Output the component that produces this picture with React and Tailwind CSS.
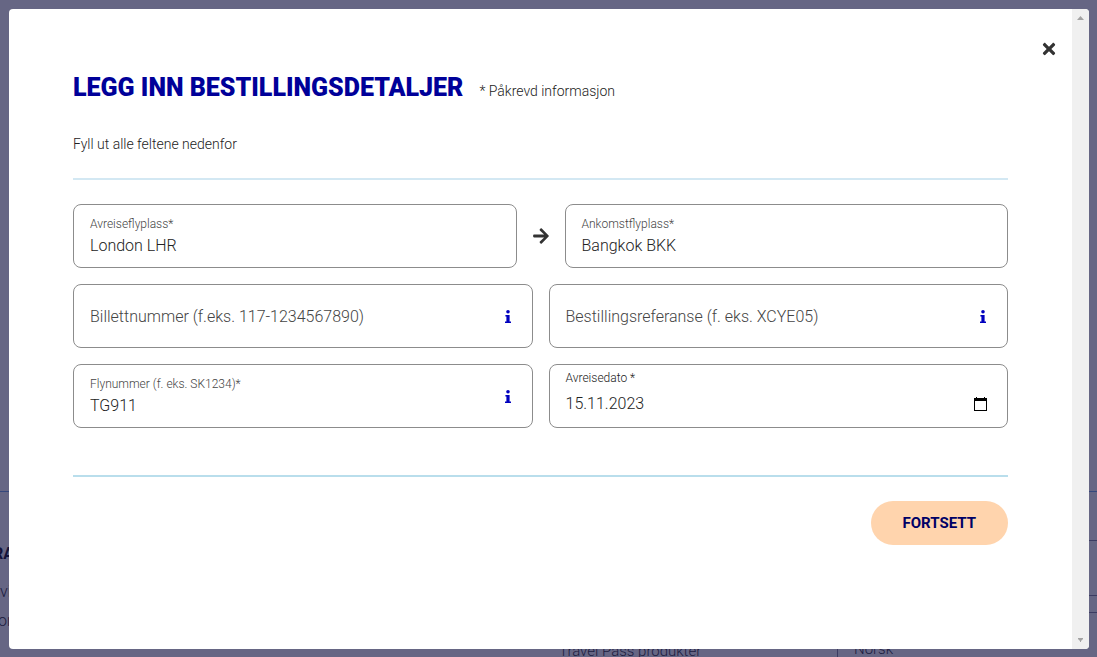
import { useState } from "react";
import { FaArrowRight, FaTimes } from "react-icons/fa";

function InfoButton({ label }) {
  return (
    <button type="button" aria-label={label} className="flex h-6 w-4 items-center justify-center text-[#0000be]">
      <svg viewBox="0 0 6 13" className="h-[13px] w-[6px]" fill="currentColor">
        <circle cx="3" cy="1.8" r="1.8" />
        <path d="M0.4 5h4.2v6.4H6V13H0v-1.600h1.400V6.600H0.400z" />
      </svg>
    </button>
  );
}

function CalendarIcon() {
  return (
    <svg viewBox="0 0 13 14" className="h-[14px] w-[13px]" fill="currentColor" shapeRendering="crispEdges">
      <path fillRule="evenodd" d="M2 0h1v1h7V0h1v1h2v13H0V1h2zM1 4v9h11V4z" />
    </svg>
  );
}

function Field({ id, label, initial = "", info }) {
  const [value, setValue] = useState(initial);
  return (
    <div className="flex h-16 min-w-0 flex-1 items-center rounded-lg border border-[#8c8c8c] px-4">
      {initial ? (
        <div className="flex min-w-0 flex-1 flex-col">
          <label htmlFor={id} className="text-xs leading-5 text-[#444444]">{label}</label>
          <input
            id={id}
            value={value}
            onChange={(e) => setValue(e.target.value)}
            className="h-6 w-full bg-transparent text-base text-[#222222] outline-none"
          />
        </div>
      ) : (
        <>
          <label htmlFor={id} className="sr-only">{label}</label>
          <input
            id={id}
            value={value}
            placeholder={label}
            onChange={(e) => setValue(e.target.value)}
            className="h-8 min-w-0 flex-1 bg-transparent text-base text-[#222222] outline-none placeholder:text-[#444444]"
          />
        </>
      )}
      {info && <InfoButton label={info} />}
    </div>
  );
}

function DateField() {
  const [date, setDate] = useState("15.11.2023");
  return (
    <div className="flex h-16 min-w-0 flex-1 flex-col rounded-lg border border-[#8c8c8c] px-4 pt-[3px]">
      <label htmlFor="date" className="text-xs leading-5 text-[#222222]">Avreisedato *</label>
      <div className="flex items-center pr-1 pt-1">
        <input
          id="date"
          value={date}
          onChange={(e) => setDate(e.target.value)}
          className="h-6 min-w-0 flex-1 bg-transparent text-base text-[#222222] outline-none"
        />
        <button type="button" aria-label="Velg dato" className="text-black">
          <CalendarIcon />
        </button>
      </div>
    </div>
  );
}

function PageBehind() {
  return (
    <div aria-hidden="true" className="absolute inset-0 overflow-hidden text-base text-[#1c1c40]">
      <div className="absolute inset-x-0 top-[491px] h-px bg-[#35477c]" />
      <div className="absolute right-0 top-[540px] h-px w-10 bg-[#3c3c62]" />
      <div className="absolute right-0 top-[595px] h-px w-10 bg-[#3c3c62]" />
      <div className="absolute right-0 top-[612px] h-px w-10 bg-[#3c3c62]" />
      <span className="absolute left-[-7px] top-[542px] font-bold text-[#12123a]">RA</span>
      <span className="absolute left-0 top-[580px]">vi</span>
      <span className="absolute left-[-2px] top-[609px]">or</span>
      <span className="absolute left-[559px] top-[640px] text-[15px]">Travel Pass produkter</span>
      <div className="absolute left-[837px] top-[612px] h-12 w-px bg-[#3c3c62]" />
      <span className="absolute left-[854px] top-[638px] text-[15px]">Norsk</span>
    </div>
  );
}

export default function App() {
  return (
    <div className="relative flex h-screen bg-[#666684] pb-2 pl-[9px] pr-2 pt-[9px] font-['Roboto','Liberation_Sans',sans-serif] font-light text-[#222222]">
      <PageBehind />
      <div role="dialog" aria-modal="true" aria-labelledby="title" className="relative flex min-w-0 flex-1 overflow-hidden rounded bg-white">
        <main className="min-w-0 flex-1 overflow-hidden px-16 pt-[61px]">
          <button type="button" aria-label="Lukk" className="absolute right-8 top-8 flex size-4 items-center justify-center text-[#333333]">
            <FaTimes className="size-[18px] shrink-0" />
          </button>

          <header className="flex items-baseline gap-4">
            <h1 id="title" className="text-[25px] leading-9 font-black text-[#000099]">
              LEGG INN BESTILLINGSDETALJER
            </h1>
            <span className="text-sm">* Påkrevd informasjon</span>
          </header>

          <p className="mt-7 text-sm leading-5">Fyll ut alle feltene nedenfor</p>
          <hr className="mt-6 border-t-2 border-[#d3e8f3]" />

          <form onSubmit={(e) => e.preventDefault()}>
            <div className="mt-6 flex flex-col gap-4">
              <div className="flex items-center gap-[15px]">
                <Field id="from" label="Avreiseflyplass*" initial="London LHR" />
                <FaArrowRight className="size-[18px] shrink-0 text-[#333333]" />
                <Field id="to" label="Ankomstflyplass*" initial="Bangkok BKK" />
              </div>
              <div className="flex gap-4">
                <Field id="ticket" label="Billettnummer (f.eks. 117-1234567890)" info="Om billettnummer" />
                <Field id="reference" label="Bestillingsreferanse (f. eks. XCYE05)" info="Om bestillingsreferanse" />
              </div>
              <div className="flex gap-4">
                <Field id="flight" label="Flynummer (f. eks. SK1234)*" initial="TG911" info="Om flynummer" />
                <DateField />
              </div>
            </div>
            <hr className="mt-[47px] border-t-2 border-[#b9deec]" />
            <div className="mt-6 flex justify-end">
              <button type="submit" className="h-11 rounded-full bg-[#ffd4ad] px-8 text-[15px] font-bold text-[#000066]">
                FORTSETT
              </button>
            </div>
          </form>
        </main>

        <div aria-hidden="true" className="flex w-[17px] shrink-0 flex-col items-center justify-between bg-[#f0f0f0] py-[7px] text-[#a3a3a3]">
          <svg viewBox="0 0 7 4" className="h-1 w-[7px]" fill="currentColor"><path d="M3.5 0L7 4H0z" /></svg>
          <svg viewBox="0 0 5 4" className="h-1 w-[5px]" fill="currentColor"><path d="M0 0h5v1L3 3v1H2V3L0 1z" /></svg>
        </div>
      </div>
    </div>
  );
}
